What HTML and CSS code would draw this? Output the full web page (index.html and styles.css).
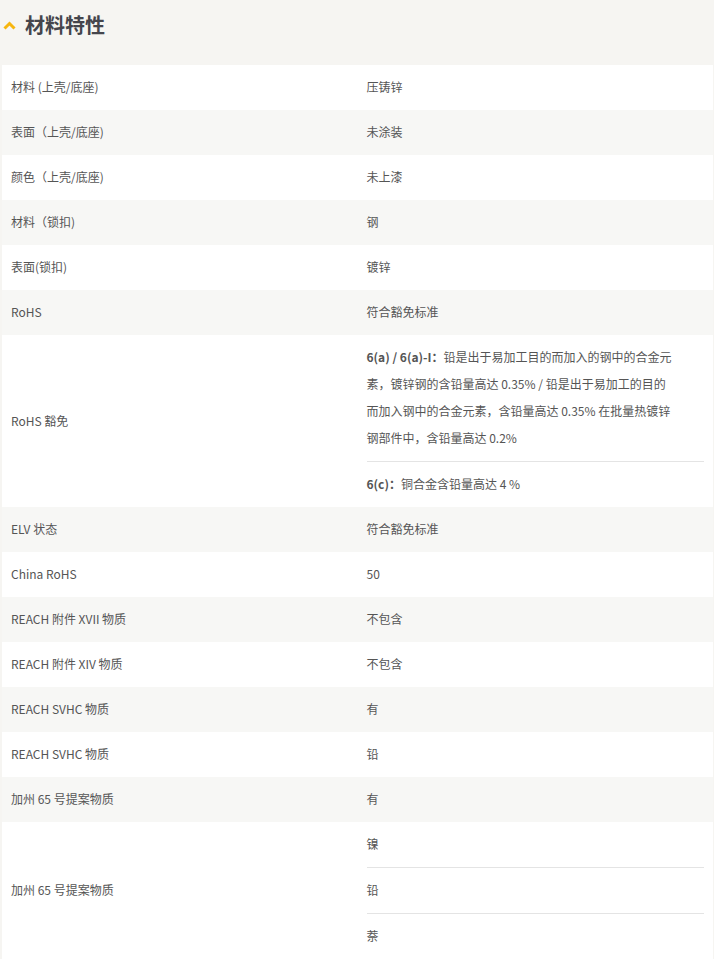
FILE: index.html
```html
<!DOCTYPE html>
<html lang="zh">
<head>
<meta charset="utf-8">
<link rel="stylesheet" href="styles.css">
</head>
<body>
<div class="section">
  <h2 class="sec-title">
    <svg class="chev" width="13" height="9" viewBox="0 0 13 9"><path d="M1.5 7.5 L6.5 2.5 L11.5 7.5" fill="none" stroke="#f7b60f" stroke-width="3"/></svg>
    <span>材料特性</span>
  </h2>
  <div class="table">
    <div class="row"><div class="k">材料 (上壳/底座)</div><div class="v">压铸锌</div></div>
    <div class="row alt"><div class="k">表面（上壳/底座)</div><div class="v">未涂装</div></div>
    <div class="row"><div class="k">颜色（上壳/底座)</div><div class="v">未上漆</div></div>
    <div class="row alt"><div class="k">材料（锁扣)</div><div class="v">钢</div></div>
    <div class="row"><div class="k">表面(锁扣)</div><div class="v">镀锌</div></div>
    <div class="row alt"><div class="k">RoHS</div><div class="v">符合豁免标准</div></div>
    <div class="row"><div class="k">RoHS 豁免</div>
      <div class="v multi">
        <div class="sub"><b>6(a) / 6(a)-I：</b>铅是出于易加工目的而加入的钢中的合金元<br>素，镀锌钢的含铅量高达 0.35% / 铅是出于易加工的目的<br>而加入钢中的合金元素，含铅量高达 0.35% 在批量热镀锌<br>钢部件中，含铅量高达 0.2%</div>
        <div class="sub"><b>6(c)：</b>铜合金含铅量高达 4 %</div>
      </div>
    </div>
    <div class="row alt"><div class="k">ELV 状态</div><div class="v">符合豁免标准</div></div>
    <div class="row"><div class="k">China RoHS</div><div class="v">50</div></div>
    <div class="row alt"><div class="k">REACH 附件 XVII 物质</div><div class="v">不包含</div></div>
    <div class="row"><div class="k">REACH 附件 XIV 物质</div><div class="v">不包含</div></div>
    <div class="row alt"><div class="k">REACH SVHC 物质</div><div class="v">有</div></div>
    <div class="row"><div class="k">REACH SVHC 物质</div><div class="v">铅</div></div>
    <div class="row alt"><div class="k">加州 65 号提案物质</div><div class="v">有</div></div>
    <div class="row"><div class="k">加州 65 号提案物质</div>
      <div class="v multi">
        <div class="sub">镍</div>
        <div class="sub">铅</div>
        <div class="sub">萘</div>
      </div>
    </div>
  </div>
</div>
</body>
</html>
```

FILE: styles.css
```css
html, body {
  margin: 0;
  padding: 0;
  background: #f6f5f2;
}
body {
  font-family: "Noto Sans CJK SC", "Noto Sans", sans-serif;
  font-size: 12px;
  color: #555;
}
.section {
  padding: 0 1px 0 2px;
}
.sec-title {
  display: flex;
  align-items: center;
  gap: 9px;
  height: 65px;
  margin: 0;
  padding: 0 0 16px 1px;
  box-sizing: border-box;
  font-size: 20px;
  font-weight: bold;
  color: #45454c;
}
.chev {
  margin-top: 2px;
  flex: none;
}
.table {
  display: flex;
  flex-direction: column;
}
.row {
  display: grid;
  grid-template-columns: 50% 50%;
  background: #fff;
}
.row.alt {
  background: #f7f7f5;
}
.k, .v {
  padding: 8px 9px 10px;
  line-height: 27px;
  display: flex;
  align-items: center;
}
.v.multi {
  display: block;
  padding: 0 9px 0 9px;
}
.sub {
  padding: 8px 0 10px;
  line-height: 27px;
  border-bottom: 1px solid #e4e4e4;
}
.sub:last-child {
  border-bottom: none;
}
.sub b {
  font-weight: bold;
}
```
